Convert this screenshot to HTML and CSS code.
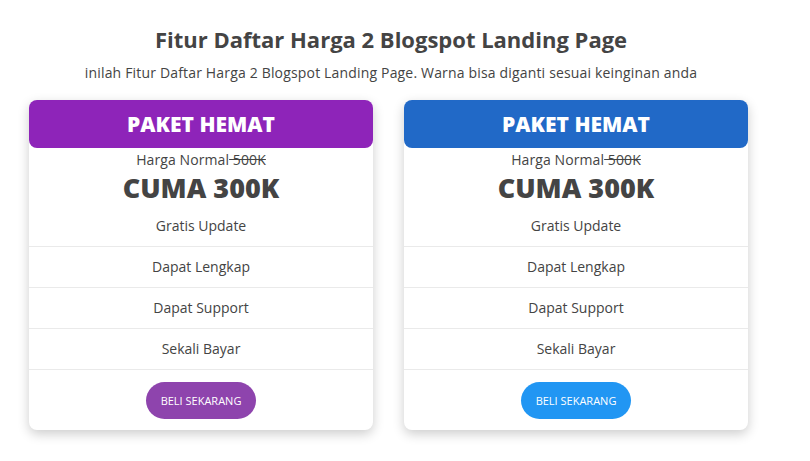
FILE: index.html
```html
<!DOCTYPE html>
<html lang="id">
<head>
<meta charset="utf-8">
<title>Fitur Daftar Harga</title>
<link rel="stylesheet" href="styles.css">
</head>
<body>
<div class="page">
  <h1 class="title">Fitur Daftar Harga 2 Blogspot Landing Page</h1>
  <p class="subtitle">inilah Fitur Daftar Harga 2 Blogspot Landing Page. Warna bisa diganti sesuai keinginan anda</p>
  <div class="cards">
    <div class="card">
      <div class="card-head purple">PAKET HEMAT</div>
      <div class="normal">Harga Normal<del> 500K</del></div>
      <div class="price">CUMA 300K</div>
      <ul class="features">
        <li>Gratis Update</li>
        <li>Dapat Lengkap</li>
        <li>Dapat Support</li>
        <li>Sekali Bayar</li>
      </ul>
      <div class="action"><a class="btn btn-purple" href="#">BELI SEKARANG</a></div>
    </div>
    <div class="card">
      <div class="card-head blue">PAKET HEMAT</div>
      <div class="normal">Harga Normal<del> 500K</del></div>
      <div class="price">CUMA 300K</div>
      <ul class="features">
        <li>Gratis Update</li>
        <li>Dapat Lengkap</li>
        <li>Dapat Support</li>
        <li>Sekali Bayar</li>
      </ul>
      <div class="action"><a class="btn btn-blue" href="#">BELI SEKARANG</a></div>
    </div>
  </div>
</div>
</body>
</html>
```
FILE: styles.css
```css
* { box-sizing: border-box; }
html, body { margin: 0; padding: 0; background: #fff; }
body {
  font-family: "Open Sans", "Noto Sans", sans-serif;
  color: #444;
}
.page { padding: 24px 28px 40px 0; }
.title {
  margin: 0;
  text-align: center;
  font-size: 22px;
  line-height: 30px;
  font-weight: 700;
  color: #444;
}
.subtitle {
  margin: 9px 0 0;
  text-align: center;
  font-size: 14px;
  line-height: 20px;
  letter-spacing: 0.17px;
  color: #444;
}
.cards {
  display: flex;
  gap: 31px;
  margin-top: 17px;
  padding-left: 29px;
}
.card {
  width: 344px;
  background: #fff;
  border-radius: 8px;
  box-shadow: 0 4px 12px rgba(0, 0, 0, 0.2);
  text-align: center;
}
.card-head {
  height: 48px;
  line-height: 48px;
  border-radius: 8px;
  color: #fff;
  font-size: 21px;
  font-weight: 800;
}
.purple { background: #8e24b9; }
.blue { background: #2169c7; }
.normal {
  margin-top: 2px;
  font-size: 14px;
  line-height: 20px;
  letter-spacing: 0.1px;
  color: #444;
}
.normal del { text-decoration: line-through; }
.price {
  font-size: 27px;
  line-height: 36px;
  font-weight: 800;
  color: #444;
}
.features {
  list-style: none;
  margin: 0;
  padding: 0;
}
.features li {
  height: 41px;
  line-height: 40px;
  border-bottom: 1px solid #eaeaea;
  font-size: 14px;
  color: #444;
}
.action {
  padding: 12px 0 11px;
}
.btn {
  display: inline-block;
  width: 110px;
  height: 37px;
  line-height: 37px;
  border-radius: 19px;
  color: #fff;
  font-size: 11px;
  text-decoration: none;
}
.btn-purple { background: #8e44ad; }
.btn-blue { background: #2196f3; }
```
